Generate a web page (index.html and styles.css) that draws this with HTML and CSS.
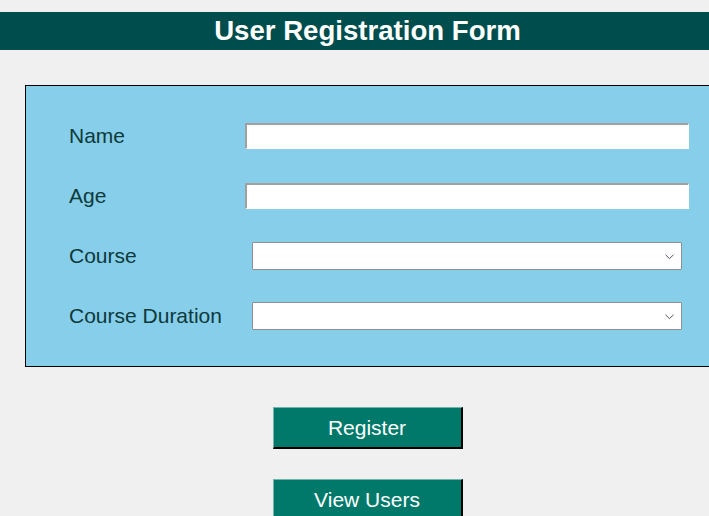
FILE: index.html
```html
<!DOCTYPE html>
<html>
<head>
<meta charset="utf-8">
<title>User Registration Form</title>
<link rel="stylesheet" href="styles.css">
</head>
<body>
<div class="app">
  <header class="title-bar">User Registration Form</header>
  <section class="panel">
    <div class="row">
      <label class="label">Name</label>
      <input class="entry" type="text">
    </div>
    <div class="row">
      <label class="label">Age</label>
      <input class="entry" type="text">
    </div>
    <div class="row">
      <label class="label">Course</label>
      <div class="combo">
        <svg class="chev" width="9" height="6" viewBox="0 0 9 6"><path d="M0.5 0.8 L4.5 4.6 L8.5 0.8" fill="none" stroke="#555" stroke-width="1"/></svg>
      </div>
    </div>
    <div class="row">
      <label class="label">Course Duration</label>
      <div class="combo">
        <svg class="chev" width="9" height="6" viewBox="0 0 9 6"><path d="M0.5 0.8 L4.5 4.6 L8.5 0.8" fill="none" stroke="#555" stroke-width="1"/></svg>
      </div>
    </div>
  </section>
  <div class="actions">
    <button class="btn">Register</button>
    <button class="btn">View Users</button>
  </div>
</div>
</body>
</html>
```

FILE: styles.css
```css
html, body {
  margin: 0;
  padding: 0;
  background: #f0f0f0;
  overflow: hidden;
}
body {
  font-family: "Liberation Sans", Arial, sans-serif;
}
.app {
  width: 735px;
  padding-top: 12px;
}
.title-bar {
  height: 38px;
  background: #004d4d;
  color: #ffffff;
  font-weight: bold;
  font-size: 27.6px;
  line-height: 38px;
  text-align: center;
}
.panel {
  margin: 35px 25px 0 25px;
  border: 1px solid #000;
  background: #87ceeb;
  padding: 20px 0 20px 43px;
  box-sizing: border-box;
  height: 282px;
}
.row {
  height: 60px;
  display: grid;
  grid-template-columns: 176px 1fr;
  align-items: center;
}
.label {
  font-size: 21px;
  color: #0d3a3a;
}
.entry {
  width: 444px;
  height: 26px;
  box-sizing: border-box;
  margin: 0;
  padding: 0 4px;
  background: #fff;
  border-style: solid;
  border-width: 2px 1px 1px 2px;
  border-color: #a0a0a0 #ffffff #ffffff #a0a0a0;
  outline: none;
}
.combo {
  position: relative;
  margin-left: 7px;
  width: 430px;
  height: 28px;
  box-sizing: border-box;
  background: #fff;
  border: 1px solid #8f8f8f;
  border-radius: 1px;
}
.chev {
  position: absolute;
  right: 7px;
  top: 11px;
}
.actions {
  display: flex;
  flex-direction: column;
  align-items: center;
  gap: 30px;
  margin-top: 40px;
}
.btn {
  width: 190px;
  height: 42px;
  box-sizing: border-box;
  margin: 0;
  padding: 0;
  background: #00796a;
  color: #ffffff;
  font-family: "Liberation Sans", Arial, sans-serif;
  font-size: 21px;
  border-style: solid;
  border-width: 1px 2px 2px 1px;
  border-color: #74b3a8 #000000 #000000 #74b3a8;
}
```
